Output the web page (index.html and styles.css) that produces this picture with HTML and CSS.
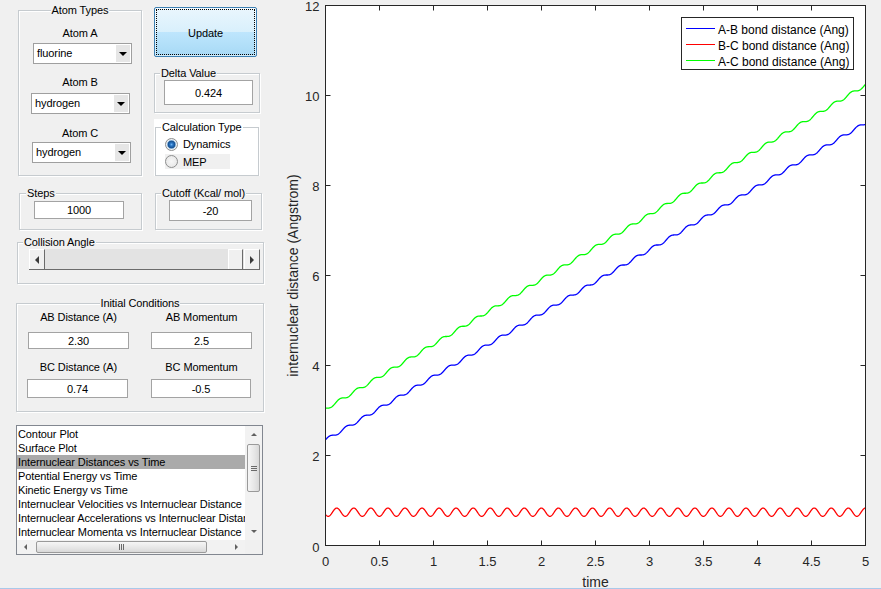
FILE: index.html
```html
<!DOCTYPE html>
<html>
<head>
<meta charset="utf-8">
<title>Reaction Dynamics</title>
<link rel="stylesheet" href="styles.css">
</head>
<body>
<div class="app">
  <div class="panel">
    <div class="row1">
      <div class="group atom-types">
        <div class="gtitle center">Atom Types</div>
        <div class="lbl lbl-a">Atom A</div>
        <div class="combo combo-a"><span class="combo-text">fluorine</span><span class="combo-btn"><i class="tri-down"></i></span></div>
        <div class="lbl lbl-b">Atom B</div>
        <div class="combo combo-b"><span class="combo-text">hydrogen</span><span class="combo-btn"><i class="tri-down"></i></span></div>
        <div class="lbl lbl-c">Atom C</div>
        <div class="combo combo-c"><span class="combo-text">hydrogen</span><span class="combo-btn"><i class="tri-down"></i></span></div>
      </div>
      <div class="col-right">
        <div class="update-btn"><span class="focus">Update</span></div>
        <div class="group delta">
          <div class="gtitle left">Delta Value</div>
          <div class="field delta-field">0.424</div>
        </div>
        <div class="calc-wrap">
          <div class="group calc">
            <div class="gtitle left white">Calculation Type</div>
            <div class="radio-row dyn"><span class="radio on"></span>Dynamics</div>
            <div class="radio-row mep"><span class="radio"></span>MEP</div>
          </div>
        </div>
      </div>
    </div>

    <div class="row2">
      <div class="group steps">
        <div class="gtitle left">Steps</div>
        <div class="field steps-field">1000</div>
      </div>
      <div class="group cutoff">
        <div class="gtitle left">Cutoff (Kcal/ mol)</div>
        <div class="field cutoff-field">-20</div>
      </div>
    </div>

    <div class="group collision">
      <div class="gtitle left">Collision Angle</div>
      <div class="slider">
        <span class="sb-btn"><i class="tri-left"></i></span>
        <span class="sb-track"></span>
        <span class="sb-thumb"></span>
        <span class="sb-btn"><i class="tri-right"></i></span>
      </div>
    </div>

    <div class="group initial">
      <div class="gtitle center">Initial Conditions</div>
      <div class="ic-row ic-lbls1"><div class="lbl">AB Distance (A)</div><div class="lbl">AB Momentum</div></div>
      <div class="ic-row ic-fields1"><div class="field">2.30</div><div class="field">2.5</div></div>
      <div class="ic-row ic-lbls2"><div class="lbl">BC Distance (A)</div><div class="lbl">BC Momentum</div></div>
      <div class="ic-row ic-fields2"><div class="field">0.74</div><div class="field">-0.5</div></div>
    </div>

    <div class="listbox">
      <div class="items">
        <div class="item">Contour Plot</div>
        <div class="item">Surface Plot</div>
        <div class="item sel">Internuclear Distances vs Time</div>
        <div class="item">Potential Energy vs Time</div>
        <div class="item">Kinetic Energy vs Time</div>
        <div class="item">Internuclear Velocities vs Internuclear Distance</div>
        <div class="item">Internuclear Accelerations vs Internuclear Distance</div>
        <div class="item">Internuclear Momenta vs Internuclear Distance</div>
      </div>
      <div class="vscroll">
        <span class="vs-btn"><i class="stri-up"></i></span>
        <span class="vthumb"><i class="grip-h"></i><i class="grip-h"></i><i class="grip-h"></i></span>
        <span class="vs-space"></span>
        <span class="vs-btn"><i class="stri-down"></i></span>
      </div>
      <div class="hscroll">
        <span class="hs-btn"><i class="stri-left"></i></span>
        <span class="hthumb"><i class="grip-v"></i><i class="grip-v"></i><i class="grip-v"></i></span>
        <span class="hs-space"></span>
        <span class="hs-btn"><i class="stri-right"></i></span>
      </div>
      <div class="corner"></div>
    </div>
  </div>

  <svg class="plot" width="611" height="588" viewBox="270 0 611 588" xmlns="http://www.w3.org/2000/svg">
    <rect x="325.5" y="5.5" width="540" height="540" fill="#ffffff"/>
    <polyline id="bc" class="curve" fill="none" stroke="#ff0000" points=""/>
    <polyline id="ab" class="curve" fill="none" stroke="#0000ff" points=""/>
    <polyline id="ac" class="curve" fill="none" stroke="#00ff00" points=""/>
    <rect x="325.5" y="5.5" width="540" height="540" fill="none" stroke="#262626" stroke-width="1"/>
    <path stroke="#262626" stroke-width="1" fill="none" d="M379.5 545.5V540.5M433.5 545.5V540.5M487.5 545.5V540.5M541.5 545.5V540.5M595.5 545.5V540.5M649.5 545.5V540.5M703.5 545.5V540.5M757.5 545.5V540.5M811.5 545.5V540.5
      M379.5 5.5V10.5M433.5 5.5V10.5M487.5 5.5V10.5M541.5 5.5V10.5M595.5 5.5V10.5M649.5 5.5V10.5M703.5 5.5V10.5M757.5 5.5V10.5M811.5 5.5V10.5
      M325.5 455.5H330.5M325.5 365.5H330.5M325.5 275.5H330.5M325.5 185.5H330.5M325.5 95.5H330.5
      M865.5 455.5H860.5M865.5 365.5H860.5M865.5 275.5H860.5M865.5 185.5H860.5M865.5 95.5H860.5"/>
    <g class="ticklbl" text-anchor="end">
      <text x="319.5" y="552">0</text>
      <text x="319.5" y="461">2</text>
      <text x="319.5" y="371">4</text>
      <text x="319.5" y="281">6</text>
      <text x="319.5" y="191">8</text>
      <text x="319.5" y="101">10</text>
      <text x="319.5" y="11">12</text>
    </g>
    <g class="ticklbl" text-anchor="middle">
      <text x="325.5" y="565.5">0</text>
      <text x="379.5" y="565.5">0.5</text>
      <text x="433.5" y="565.5">1</text>
      <text x="487.5" y="565.5">1.5</text>
      <text x="541.5" y="565.5">2</text>
      <text x="595.5" y="565.5">2.5</text>
      <text x="649.5" y="565.5">3</text>
      <text x="703.5" y="565.5">3.5</text>
      <text x="757.5" y="565.5">4</text>
      <text x="811.5" y="565.5">4.5</text>
      <text x="865.5" y="565.5">5</text>
    </g>
    <text class="axlbl" x="595.5" y="586.5" text-anchor="middle">time</text>
    <text class="axlbl" transform="rotate(-90)" x="-275.5" y="298" text-anchor="middle">internuclear distance (Angstrom)</text>
    <rect x="681.5" y="17.5" width="172" height="52" fill="#ffffff" stroke="#262626" stroke-width="1"/>
    <path d="M686 28.5H715" stroke="#0000ff" stroke-width="1"/>
    <path d="M686 44.5H715" stroke="#ff0000" stroke-width="1"/>
    <path d="M686 60.5H715" stroke="#00ff00" stroke-width="1"/>
    <g class="leglbl">
      <text x="718" y="33.5">A-B bond distance (Ang)</text>
      <text x="718" y="49.5">B-C bond distance (Ang)</text>
      <text x="718" y="66">A-C bond distance (Ang)</text>
    </g>
  </svg>
</div>
<script src="script.js"></script>
</body>
</html>
```

FILE: styles.css
```css
html, body {
  margin: 0;
  padding: 0;
}
body {
  background: #f0f0f0;
  font-family: "Liberation Sans", Arial, sans-serif;
  font-size: 11px;
  letter-spacing: -0.1px;
  color: #000;
  width: 881px;
  height: 589px;
  overflow: hidden;
}
.app {
  display: flex;
  width: 881px;
  height: 588px;
  border-bottom: 1px solid #a9c9ea;
}
.panel {
  width: 270px;
  flex: none;
}
.plot {
  display: block;
  flex: none;
}
.curve {
  stroke-width: 1.3;
  stroke-linejoin: round;
}

/* group boxes */
.group {
  box-sizing: border-box;
  border: 1px solid #c6cbcf;
  box-shadow: inset 1px 1px 0 #ffffff, 1px 1px 0 #ffffff;
}
.gtitle {
  width: fit-content;
  margin-top: -7px;
  line-height: 13px;
  height: 13px;
  padding: 0 1px;
  background: #f0f0f0;
  white-space: nowrap;
}
.gtitle.center { margin-left: auto; margin-right: auto; }
.gtitle.left { margin-left: 5px; }
.gtitle.white { background: #ffffff; }

.lbl {
  line-height: 13px;
  height: 13px;
  text-align: center;
  white-space: nowrap;
}

.field {
  box-sizing: border-box;
  background: #fff;
  border: 1px solid #a3a3a3;
  display: flex;
  align-items: center;
  justify-content: center;
}

/* row 1 */
.row1 {
  display: flex;
  align-items: flex-start;
}
.atom-types {
  margin: 10px 0 0 18px;
  width: 124px;
  height: 166px;
}
.lbl-a { margin-top: 10px; }
.lbl-b { margin-top: 12px; }
.lbl-c { margin-top: 13px; }

.combo {
  box-sizing: border-box;
  display: flex;
  width: 99px;
  height: 21px;
  background: #fff;
  border: 1px solid #9f9f9f;
}
.combo-a { margin: 3px 0 0 14px; }
.combo-b { margin: 4px 0 0 12px; }
.combo-c { margin: 2px 0 0 13px; }
.combo-text {
  flex: 1;
  padding-left: 3px;
  line-height: 19px;
}
.combo-btn {
  width: 14px;
  margin: 1px 1px 1px 0;
  background: #e6e6e6;
  display: flex;
  align-items: center;
  justify-content: center;
}
.tri-down {
  width: 0;
  height: 0;
  border-left: 4px solid transparent;
  border-right: 4px solid transparent;
  border-top: 4px solid #000;
}

.col-right {
  margin-left: 12px;
  width: 107px;
}
.update-btn {
  box-sizing: border-box;
  margin-top: 7px;
  width: 103px;
  height: 50px;
  border: 1px solid #3c7fb1;
  border-radius: 2px;
  padding: 1px;
  background: linear-gradient(to bottom, #eaf6fd 0%, #d9f0fc 49%, #bee6fd 50%, #a7d9f5 100%);
  box-shadow: inset 0 0 0 1px rgba(255,255,255,0.5);
}
.update-btn .focus {
  box-sizing: border-box;
  display: flex;
  align-items: center;
  justify-content: center;
  height: 100%;
  padding-top: 1px;
  border: 1px dotted #000;
  font-size: 11px;
}

.delta {
  margin-top: 16px;
  width: 106px;
  height: 40px;
}
.delta-field {
  margin-left: 9px;
  width: 89px;
  height: 25px;
}

.calc-wrap {
  margin-top: 6px;
  width: 106px;
  height: 57px;
  background: #fff;
  padding-top: 8px;
  box-sizing: border-box;
}
.calc {
  margin-left: 1px;
  width: 104px;
  height: 49px;
  box-shadow: none;
}
.radio-row {
  display: flex;
  align-items: center;
  height: 14px;
  margin-left: 9px;
  white-space: nowrap;
}
.radio-row.dyn { margin-top: 3px; }
.radio-row.mep {
  margin-top: 3px;
  height: 15px;
  width: 65px;
  background: #f0f0f0;
}
.radio {
  box-sizing: border-box;
  flex: none;
  width: 13px;
  height: 13px;
  border-radius: 50%;
  border: 1px solid #8e8f8f;
  background: radial-gradient(circle, #f7f7f7 0, #e3e3e3 100%);
  margin-right: 5px;
}
.radio.on {
  background: radial-gradient(circle, #6fb3ee 0, #2a76c6 1.5px, #164f8e 3.5px, #9cc0e0 4.2px, #eef2f6 5px, #dcdcdc 6px);
}

/* row 2 */
.row2 {
  display: flex;
  margin-top: 17px;
}
.steps {
  margin-left: 19px;
  width: 123px;
  height: 37px;
}
.steps .gtitle { margin-left: 6px; }
.steps-field {
  margin: 1px 0 0 14px;
  width: 90px;
  height: 18px;
}
.cutoff {
  margin-left: 13px;
  width: 107px;
  height: 37px;
}
.cutoff-field {
  margin-left: 13px;
  width: 83px;
  height: 21px;
}

/* collision */
.collision {
  margin: 12px 0 0 17px;
  width: 247px;
  height: 42px;
}
.slider {
  box-sizing: border-box;
  display: flex;
  margin-left: 11px;
  width: 231px;
  height: 21px;
  background: #e3e3e3;
  border-bottom: 1px solid #6b6b6b;
}
.sb-btn, .sb-thumb {
  box-sizing: border-box;
  flex: none;
  width: 16px;
  background: #f0f0f0;
  border-top: 1px solid #ffffff;
  border-left: 1px solid #ffffff;
  border-right: 1px solid #6b6b6b;
  display: flex;
  align-items: center;
  justify-content: center;
}
.sb-thumb { width: 15px; margin-right: 1px; }
.sb-track { flex: 1; }
.tri-left {
  width: 0; height: 0;
  border-top: 4px solid transparent;
  border-bottom: 4px solid transparent;
  border-right: 4px solid #3a3a3a;
}
.tri-right {
  width: 0; height: 0;
  border-top: 4px solid transparent;
  border-bottom: 4px solid transparent;
  border-left: 4px solid #3a3a3a;
}

/* initial conditions */
.initial {
  margin: 19px 0 0 16px;
  width: 248px;
  height: 109px;
}
.ic-row {
  display: grid;
  grid-template-columns: 101px 101px;
  column-gap: 22px;
  margin-left: 11px;
}
.ic-lbls1 { margin-top: 1px; }
.ic-fields1 { margin-top: 8px; }
.ic-fields1 .field { height: 17px; }
.ic-lbls2 { margin-top: 12px; }
.ic-fields2 { margin-top: 5px; margin-left: 10px; }
.ic-fields2 .field { height: 19px; }
.ic-fields2 .field + .field { margin-left: 1px; }

/* listbox */
.listbox {
  box-sizing: border-box;
  margin: 13px 0 0 16px;
  width: 247px;
  height: 130px;
  border: 1px solid #828790;
  background: #fff;
  display: grid;
  grid-template-columns: 228px 17px;
  grid-template-rows: 114px 14px;
}
.items {
  overflow: hidden;
  padding-top: 1px;
  white-space: nowrap;
}
.item {
  height: 14px;
  line-height: 14px;
  padding-left: 1px;
}
.item.sel { background: #aaaaaa; }

.vscroll {
  display: flex;
  flex-direction: column;
  align-items: center;
  background: #f2f2f2;
}
.vs-btn {
  flex: none;
  height: 17px;
  width: 17px;
  display: flex;
  align-items: center;
  justify-content: center;
}
.vthumb {
  box-sizing: border-box;
  flex: none;
  margin-top: 1px;
  width: 13px;
  height: 48px;
  border: 1px solid #9a9a9a;
  border-radius: 2px;
  background: linear-gradient(to right, #f6f6f6, #e6e6e6 60%, #d8d8d8);
  display: flex;
  flex-direction: column;
  align-items: center;
  justify-content: center;
  gap: 1px;
}
.grip-h {
  display: block;
  width: 6px;
  height: 1px;
  background: #6a6a6a;
}
.vs-space { flex: 1; }
.stri-up {
  width: 0; height: 0;
  border-left: 3.5px solid transparent;
  border-right: 3.5px solid transparent;
  border-bottom: 3px solid #606060;
}
.stri-down {
  width: 0; height: 0;
  border-left: 3.5px solid transparent;
  border-right: 3.5px solid transparent;
  border-top: 3px solid #606060;
}
.stri-left {
  width: 0; height: 0;
  border-top: 3.5px solid transparent;
  border-bottom: 3.5px solid transparent;
  border-right: 3px solid #606060;
}
.stri-right {
  width: 0; height: 0;
  border-top: 3.5px solid transparent;
  border-bottom: 3.5px solid transparent;
  border-left: 3px solid #606060;
}
.hscroll {
  display: flex;
  align-items: center;
  background: #f2f2f2;
}
.hs-btn {
  flex: none;
  width: 17px;
  height: 14px;
  display: flex;
  align-items: center;
  justify-content: center;
}
.hthumb {
  box-sizing: border-box;
  flex: none;
  margin-left: 2px;
  width: 171px;
  height: 12px;
  border: 1px solid #9a9a9a;
  border-radius: 2px;
  background: linear-gradient(to bottom, #f6f6f6, #e6e6e6 60%, #d8d8d8);
  display: flex;
  align-items: center;
  justify-content: center;
  gap: 1px;
}
.grip-v {
  display: block;
  width: 1px;
  height: 6px;
  background: #6a6a6a;
}
.hs-space { flex: 1; }
.corner { background: #f0f0f0; }

/* plot text */
.ticklbl text {
  font-family: "Liberation Sans", Arial, sans-serif;
  font-size: 13px;
  fill: #262626;
  letter-spacing: 0;
}
.axlbl {
  font-family: "Liberation Sans", Arial, sans-serif;
  font-size: 14px;
  fill: #262626;
  letter-spacing: 0;
}
.leglbl text {
  font-family: "Liberation Sans", Arial, sans-serif;
  font-size: 12px;
  fill: #000;
  letter-spacing: 0;
}
```

FILE: script.js
```js
(function () {
  var P = 0.1579;
  var w = 2 * Math.PI / P;
  function X(t) { return 325.5 + 108 * t; }
  function Y(v) { return 545.5 - 45 * v; }
  var ab = [], bc = [], ac = [];
  var sb = 1.409, sg = 1.44;
  for (var i = 0; i <= 2000; i++) {
    var t = i * 5 / 2000;
    var x = X(t).toFixed(2);
    var vb = 2.344 + sb * t - (sb / w) * Math.sin(w * (t - 0.076));
    var vg = 3.033 + sg * t - (sg / w) * Math.sin(w * (t - 0.014));
    var vr = 0.74 + 0.092 * Math.cos(w * (t - 0.104));
    ab.push(x + ',' + Y(vb).toFixed(2));
    ac.push(x + ',' + Y(vg).toFixed(2));
    bc.push(x + ',' + Y(vr).toFixed(2));
  }
  document.getElementById('ab').setAttribute('points', ab.join(' '));
  document.getElementById('ac').setAttribute('points', ac.join(' '));
  document.getElementById('bc').setAttribute('points', bc.join(' '));
})();
```
